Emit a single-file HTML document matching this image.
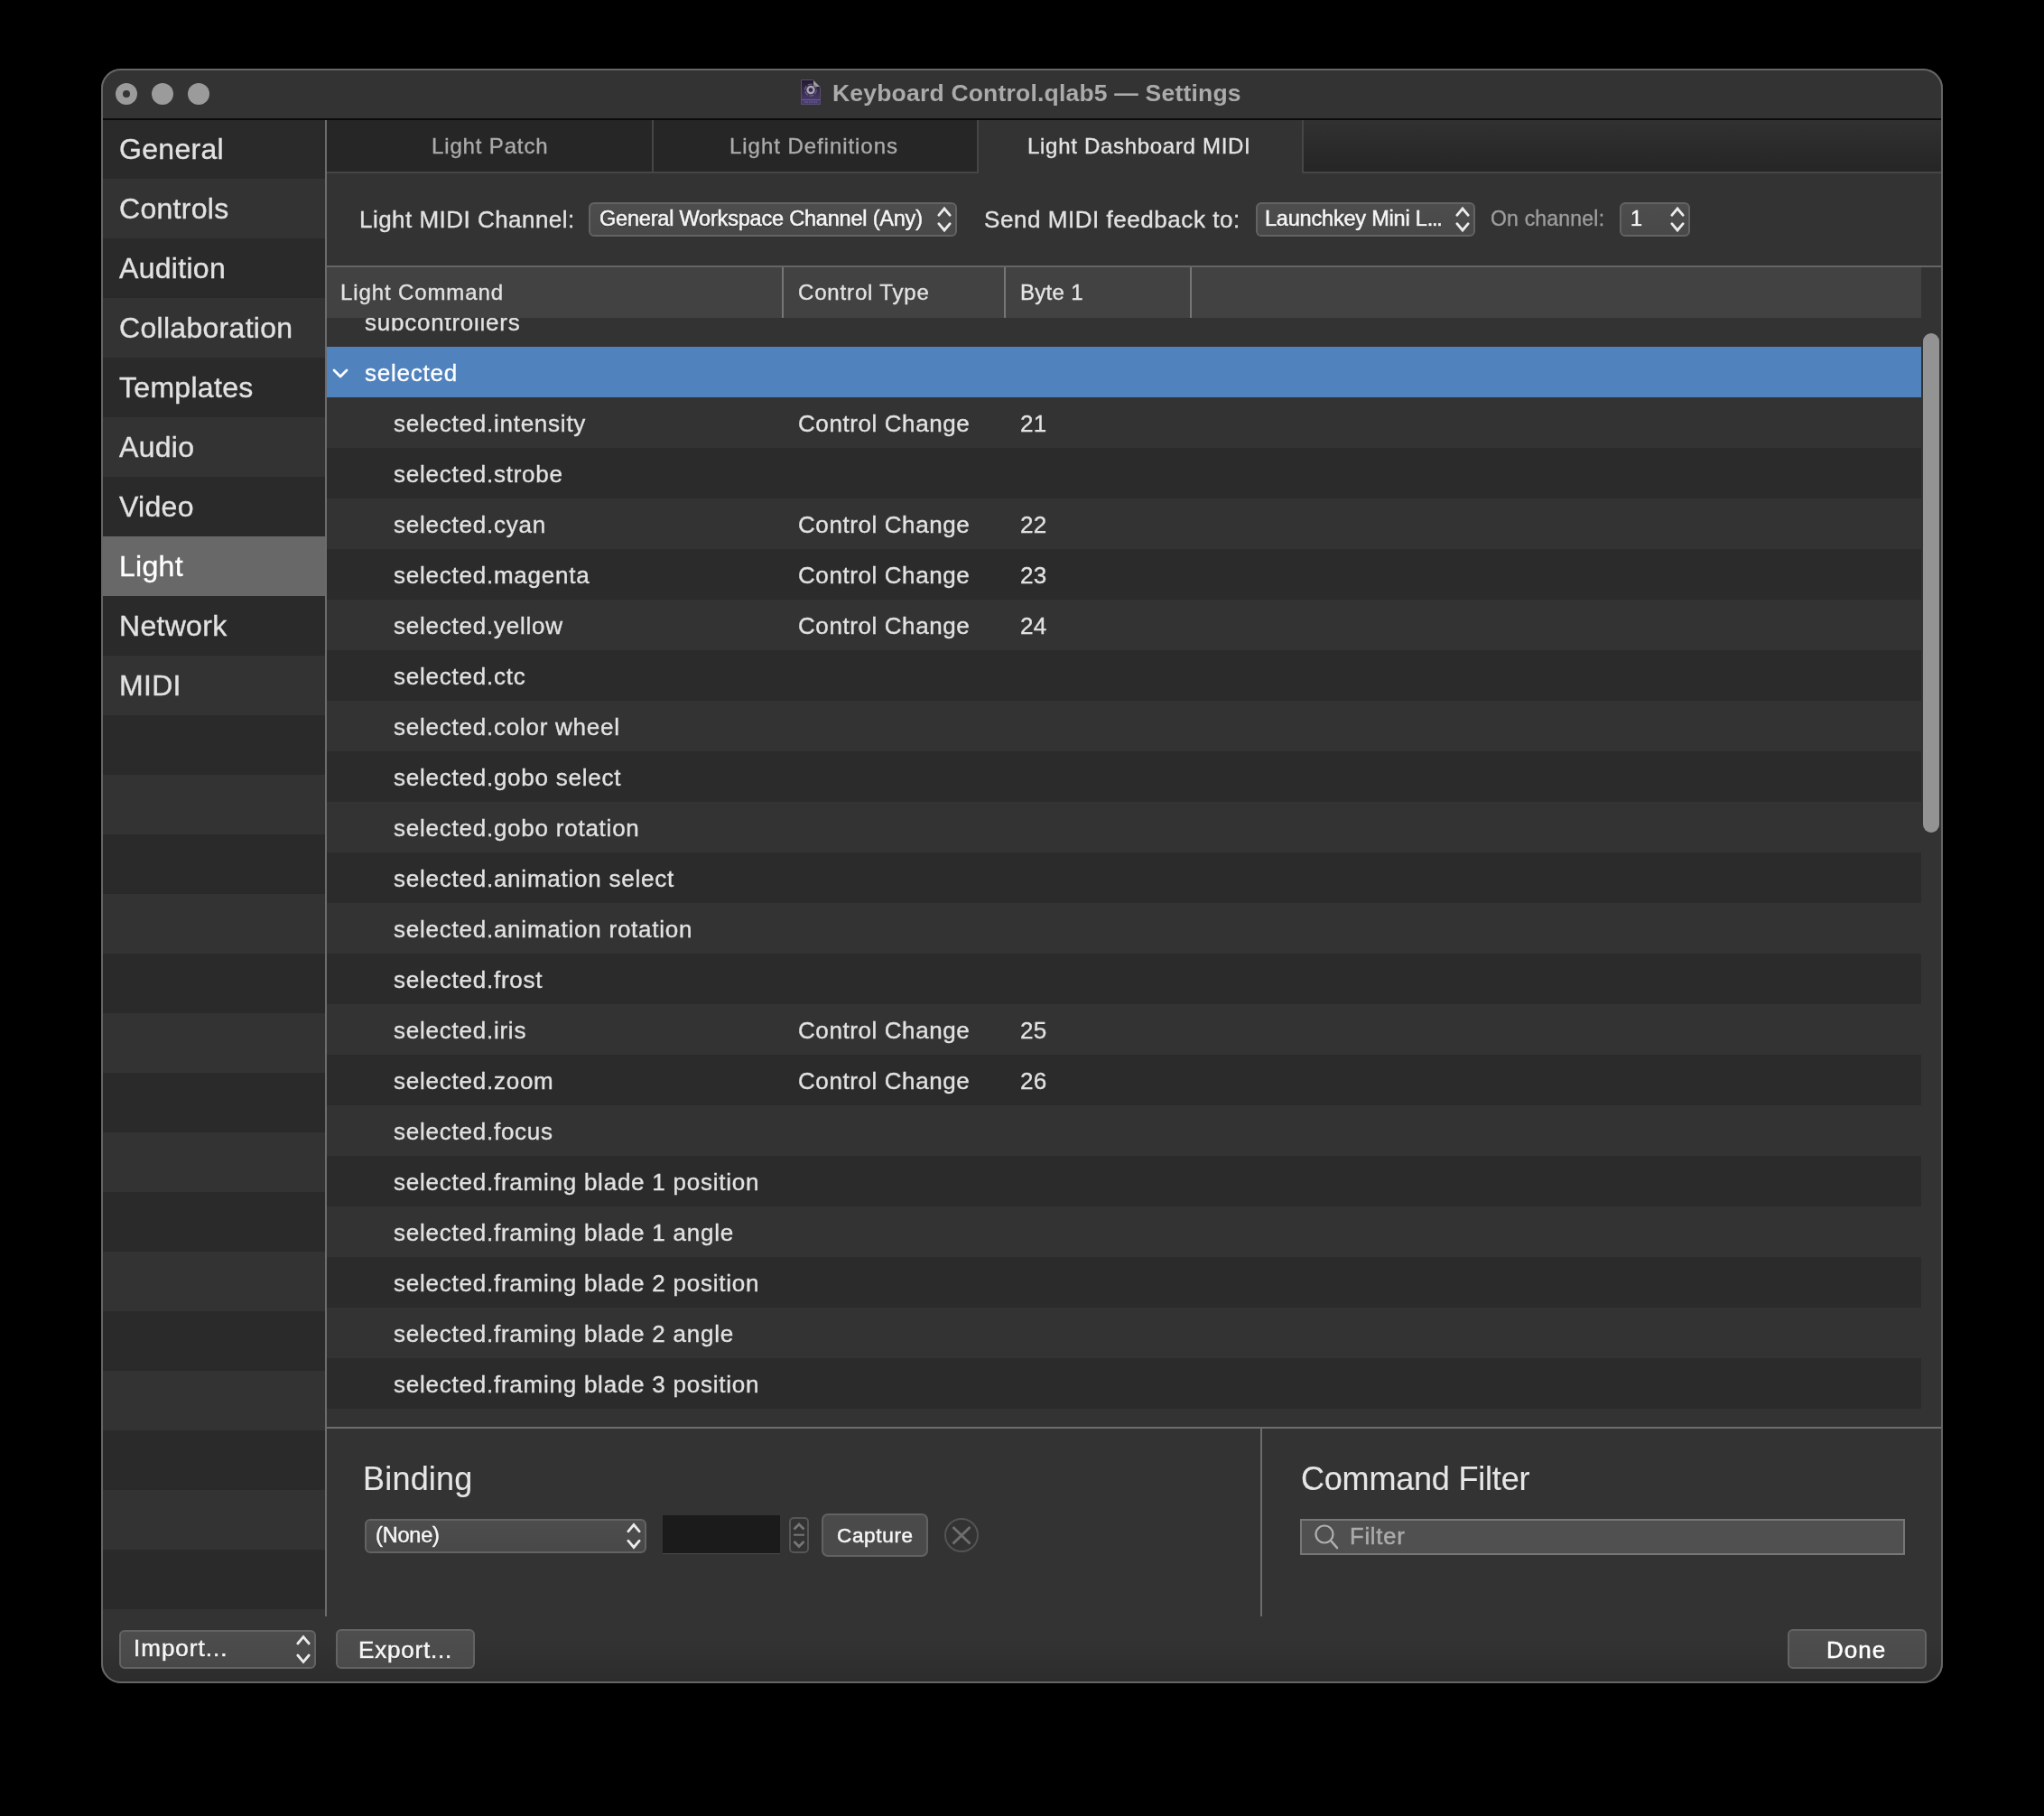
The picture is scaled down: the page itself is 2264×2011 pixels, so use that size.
<!DOCTYPE html><html><head><meta charset="utf-8"><style>
html,body{margin:0;padding:0;background:#000;width:2264px;height:2011px;overflow:hidden}
.t{position:absolute;white-space:nowrap;font-family:"Liberation Sans",sans-serif;will-change:transform;-webkit-text-stroke:0.35px currentColor}
.r{position:absolute}
svg{position:absolute;overflow:visible}
</style></head><body>
<div class="r" style="left:112px;top:76px;width:2040px;height:1788px;background:#333333;border-radius:22px;overflow:hidden;">
</div>
<div class="r" style="left:112px;top:76px;width:2040px;height:1788px;border-radius:22px;overflow:hidden;">
<div class="r" style="left:-112px;top:-76px;width:2264px;height:2011px;">
<div class="r" style="left:112px;top:76px;width:2040px;height:56px;background:#333333;"></div>
<div class="r" style="left:112px;top:131px;width:2040px;height:2px;background:#0c0c0c;"></div>
<div class="r" style="left:112px;top:133px;width:248px;height:65px;background:#2a2a2a;"></div>
<div class="r" style="left:112px;top:198px;width:248px;height:66px;background:#333333;"></div>
<div class="r" style="left:112px;top:264px;width:248px;height:66px;background:#2a2a2a;"></div>
<div class="r" style="left:112px;top:330px;width:248px;height:66px;background:#333333;"></div>
<div class="r" style="left:112px;top:396px;width:248px;height:66px;background:#2a2a2a;"></div>
<div class="r" style="left:112px;top:462px;width:248px;height:66px;background:#333333;"></div>
<div class="r" style="left:112px;top:528px;width:248px;height:66px;background:#2a2a2a;"></div>
<div class="r" style="left:112px;top:594px;width:250px;height:66px;background:#686868;"></div>
<div class="r" style="left:112px;top:660px;width:248px;height:66px;background:#2a2a2a;"></div>
<div class="r" style="left:112px;top:726px;width:248px;height:66px;background:#333333;"></div>
<div class="r" style="left:112px;top:792px;width:248px;height:66px;background:#2a2a2a;"></div>
<div class="r" style="left:112px;top:858px;width:248px;height:66px;background:#333333;"></div>
<div class="r" style="left:112px;top:924px;width:248px;height:66px;background:#2a2a2a;"></div>
<div class="r" style="left:112px;top:990px;width:248px;height:66px;background:#333333;"></div>
<div class="r" style="left:112px;top:1056px;width:248px;height:66px;background:#2a2a2a;"></div>
<div class="r" style="left:112px;top:1122px;width:248px;height:66px;background:#333333;"></div>
<div class="r" style="left:112px;top:1188px;width:248px;height:66px;background:#2a2a2a;"></div>
<div class="r" style="left:112px;top:1254px;width:248px;height:66px;background:#333333;"></div>
<div class="r" style="left:112px;top:1320px;width:248px;height:66px;background:#2a2a2a;"></div>
<div class="r" style="left:112px;top:1386px;width:248px;height:66px;background:#333333;"></div>
<div class="r" style="left:112px;top:1452px;width:248px;height:66px;background:#2a2a2a;"></div>
<div class="r" style="left:112px;top:1518px;width:248px;height:66px;background:#333333;"></div>
<div class="r" style="left:112px;top:1584px;width:248px;height:66px;background:#2a2a2a;"></div>
<div class="r" style="left:112px;top:1650px;width:248px;height:66px;background:#333333;"></div>
<div class="r" style="left:112px;top:1716px;width:248px;height:66px;background:#2a2a2a;"></div>
<div class="r" style="left:112px;top:1782px;width:2040px;height:82px;background:linear-gradient(#333333 40%,#2c2c2c);"></div>
<div class="t " style="left:132px;top:149px;font-size:32px;line-height:32px;color:#e2e2e2;font-weight:400;letter-spacing:0.3px;">General</div>
<div class="t " style="left:132px;top:215px;font-size:32px;line-height:32px;color:#e2e2e2;font-weight:400;letter-spacing:0.3px;">Controls</div>
<div class="t " style="left:132px;top:281px;font-size:32px;line-height:32px;color:#e2e2e2;font-weight:400;letter-spacing:0.3px;">Audition</div>
<div class="t " style="left:132px;top:347px;font-size:32px;line-height:32px;color:#e2e2e2;font-weight:400;letter-spacing:0.3px;">Collaboration</div>
<div class="t " style="left:132px;top:413px;font-size:32px;line-height:32px;color:#e2e2e2;font-weight:400;letter-spacing:0.3px;">Templates</div>
<div class="t " style="left:132px;top:479px;font-size:32px;line-height:32px;color:#e2e2e2;font-weight:400;letter-spacing:0.3px;">Audio</div>
<div class="t " style="left:132px;top:545px;font-size:32px;line-height:32px;color:#e2e2e2;font-weight:400;letter-spacing:0.3px;">Video</div>
<div class="t " style="left:132px;top:611px;font-size:32px;line-height:32px;color:#ffffff;font-weight:400;letter-spacing:0.3px;">Light</div>
<div class="t " style="left:132px;top:677px;font-size:32px;line-height:32px;color:#e2e2e2;font-weight:400;letter-spacing:0.3px;">Network</div>
<div class="t " style="left:132px;top:743px;font-size:32px;line-height:32px;color:#e2e2e2;font-weight:400;letter-spacing:0.3px;">MIDI</div>
<div class="r" style="left:360px;top:133px;width:2px;height:1657px;background:#6c6c6c;"></div>
<div class="r" style="left:362px;top:133px;width:1790px;height:58px;background:#262626;"></div>
<div class="r" style="left:1443px;top:133px;width:709px;height:58px;background:linear-gradient(#313131,#252525);"></div>
<div class="r" style="left:362px;top:190px;width:1790px;height:2px;background:#464646;"></div>
<div class="r" style="left:722px;top:133px;width:2px;height:58px;background:#464646;"></div>
<div class="r" style="left:1442px;top:133px;width:2px;height:58px;background:#464646;"></div>
<div class="r" style="left:1082px;top:133px;width:2px;height:58px;background:#464646;"></div>
<div class="r" style="left:1084px;top:133px;width:358px;height:59px;background:#333333;"></div>
<div class="t " style="left:478px;top:150px;font-size:24px;line-height:24px;color:#ababab;font-weight:400;letter-spacing:0.85px;">Light Patch</div>
<div class="t " style="left:808.4px;top:150px;font-size:24px;line-height:24px;color:#ababab;font-weight:400;letter-spacing:0.95px;">Light Definitions</div>
<div class="t " style="left:1138px;top:150px;font-size:24px;line-height:24px;color:#e4e4e4;font-weight:400;letter-spacing:0.7px;">Light Dashboard MIDI</div>
<div class="t " style="left:398px;top:230px;font-size:26px;line-height:26px;color:#e2e2e2;font-weight:400;letter-spacing:0.47px;">Light MIDI Channel:</div>
<div class="t " style="left:1090.4px;top:230px;font-size:26px;line-height:26px;color:#e2e2e2;font-weight:400;letter-spacing:0.55px;">Send MIDI feedback to:</div>
<div class="t " style="left:1650.5px;top:231px;font-size:23px;line-height:23px;color:#9d9d9d;font-weight:400;letter-spacing:0.2px;">On channel:</div>
<div class="r" style="left:652px;top:224px;width:408px;height:38px;box-sizing:border-box;border:2px solid #636363;border-radius:6px;background:linear-gradient(#4d4d4d,#484848);"></div>
<div class="t " style="left:663.8px;top:231px;font-size:23.5px;line-height:23.5px;color:#f6f6f6;font-weight:400;letter-spacing:-0.2px;text-shadow:0 1px 1px rgba(0,0,0,.55);-webkit-text-stroke:0.5px currentColor;">General Workspace Channel (Any)</div>
<svg style="left:0;top:0" width="2264" height="2011" viewBox="0 0 2264 2011"><g fill="none" stroke="#ececec" stroke-width="2.8" stroke-linecap="round" stroke-linejoin="miter"><path d="M1039.8,238.3 L1046,231.0 L1052.2,238.3"/><path d="M1039.8,247.7 L1046,255.0 L1052.2,247.7"/></g></svg>
<div class="r" style="left:1391px;top:224px;width:243px;height:38px;box-sizing:border-box;border:2px solid #636363;border-radius:6px;background:linear-gradient(#4d4d4d,#484848);"></div>
<div class="t " style="left:1401px;top:231px;font-size:23.5px;line-height:23.5px;color:#f6f6f6;font-weight:400;letter-spacing:-0.2px;text-shadow:0 1px 1px rgba(0,0,0,.55);-webkit-text-stroke:0.5px currentColor;">Launchkey Mini L<span style="letter-spacing:-1.2px">...</span></div>
<svg style="left:0;top:0" width="2264" height="2011" viewBox="0 0 2264 2011"><g fill="none" stroke="#ececec" stroke-width="2.8" stroke-linecap="round" stroke-linejoin="miter"><path d="M1613.8,238.3 L1620,231.0 L1626.2,238.3"/><path d="M1613.8,247.7 L1620,255.0 L1626.2,247.7"/></g></svg>
<div class="r" style="left:1794px;top:224px;width:78px;height:38px;box-sizing:border-box;border:2px solid #636363;border-radius:6px;background:linear-gradient(#4d4d4d,#484848);"></div>
<div class="t " style="left:1805.5px;top:231px;font-size:23.5px;line-height:23.5px;color:#f6f6f6;font-weight:400;text-shadow:0 1px 1px rgba(0,0,0,.55);-webkit-text-stroke:0.5px currentColor;">1</div>
<svg style="left:0;top:0" width="2264" height="2011" viewBox="0 0 2264 2011"><g fill="none" stroke="#ececec" stroke-width="2.8" stroke-linecap="round" stroke-linejoin="miter"><path d="M1851.8,238.3 L1858,231.0 L1864.2,238.3"/><path d="M1851.8,247.7 L1858,255.0 L1864.2,247.7"/></g></svg>
<div class="r" style="left:362px;top:294px;width:1790px;height:2px;background:#656565;"></div>
<div class="r" style="left:362px;top:296px;width:1766px;height:56px;background:#424242;"></div>
<div class="r" style="left:866px;top:296px;width:2px;height:56px;background:#767676;"></div>
<div class="r" style="left:1112px;top:296px;width:2px;height:56px;background:#767676;"></div>
<div class="r" style="left:1318px;top:296px;width:2px;height:56px;background:#767676;"></div>
<div class="t " style="left:376.9px;top:312px;font-size:24px;line-height:24px;color:#e2e2e2;font-weight:400;letter-spacing:0.88px;">Light Command</div>
<div class="t " style="left:883.8px;top:312px;font-size:24px;line-height:24px;color:#e2e2e2;font-weight:400;letter-spacing:0.84px;">Control Type</div>
<div class="t " style="left:1130.2px;top:312px;font-size:24px;line-height:24px;color:#e4e4e4;font-weight:400;letter-spacing:0.3px;">Byte 1</div>
<div class="r" style="left:362px;top:352px;width:1766px;height:1208px;overflow:hidden;">
<div class="r" style="left:0;top:-24px;width:1766px;height:56px;background:#333333"></div>
<div class="t " style="left:41.80000000000001px;top:-8px;font-size:26px;line-height:26px;color:#e2e2e2;font-weight:400;letter-spacing:0.76px;">subcontrollers</div>
<div class="r" style="left:0;top:32px;width:1766px;height:56px;background:#5082be"></div>
<div class="t " style="left:41.80000000000001px;top:48px;font-size:26px;line-height:26px;color:#ffffff;font-weight:400;letter-spacing:0.76px;">selected</div>
<div class="r" style="left:0;top:88px;width:1766px;height:56px;background:#333333"></div>
<div class="t " style="left:74.19999999999999px;top:104px;font-size:26px;line-height:26px;color:#e2e2e2;font-weight:400;letter-spacing:0.76px;">selected.intensity</div>
<div class="t " style="left:521.8px;top:104px;font-size:26px;line-height:26px;color:#e2e2e2;font-weight:400;letter-spacing:0.59px;">Control Change</div>
<div class="t " style="left:767.5px;top:104px;font-size:26px;line-height:26px;color:#e2e2e2;font-weight:400;letter-spacing:0.4px;">21</div>
<div class="r" style="left:0;top:144px;width:1766px;height:56px;background:#2b2b2b"></div>
<div class="t " style="left:74.19999999999999px;top:160px;font-size:26px;line-height:26px;color:#e2e2e2;font-weight:400;letter-spacing:0.76px;">selected.strobe</div>
<div class="r" style="left:0;top:200px;width:1766px;height:56px;background:#333333"></div>
<div class="t " style="left:74.19999999999999px;top:216px;font-size:26px;line-height:26px;color:#e2e2e2;font-weight:400;letter-spacing:0.76px;">selected.cyan</div>
<div class="t " style="left:521.8px;top:216px;font-size:26px;line-height:26px;color:#e2e2e2;font-weight:400;letter-spacing:0.59px;">Control Change</div>
<div class="t " style="left:767.5px;top:216px;font-size:26px;line-height:26px;color:#e2e2e2;font-weight:400;letter-spacing:0.4px;">22</div>
<div class="r" style="left:0;top:256px;width:1766px;height:56px;background:#2b2b2b"></div>
<div class="t " style="left:74.19999999999999px;top:272px;font-size:26px;line-height:26px;color:#e2e2e2;font-weight:400;letter-spacing:0.76px;">selected.magenta</div>
<div class="t " style="left:521.8px;top:272px;font-size:26px;line-height:26px;color:#e2e2e2;font-weight:400;letter-spacing:0.59px;">Control Change</div>
<div class="t " style="left:767.5px;top:272px;font-size:26px;line-height:26px;color:#e2e2e2;font-weight:400;letter-spacing:0.4px;">23</div>
<div class="r" style="left:0;top:312px;width:1766px;height:56px;background:#333333"></div>
<div class="t " style="left:74.19999999999999px;top:328px;font-size:26px;line-height:26px;color:#e2e2e2;font-weight:400;letter-spacing:0.76px;">selected.yellow</div>
<div class="t " style="left:521.8px;top:328px;font-size:26px;line-height:26px;color:#e2e2e2;font-weight:400;letter-spacing:0.59px;">Control Change</div>
<div class="t " style="left:767.5px;top:328px;font-size:26px;line-height:26px;color:#e2e2e2;font-weight:400;letter-spacing:0.4px;">24</div>
<div class="r" style="left:0;top:368px;width:1766px;height:56px;background:#2b2b2b"></div>
<div class="t " style="left:74.19999999999999px;top:384px;font-size:26px;line-height:26px;color:#e2e2e2;font-weight:400;letter-spacing:0.76px;">selected.ctc</div>
<div class="r" style="left:0;top:424px;width:1766px;height:56px;background:#333333"></div>
<div class="t " style="left:74.19999999999999px;top:440px;font-size:26px;line-height:26px;color:#e2e2e2;font-weight:400;letter-spacing:0.76px;">selected.color wheel</div>
<div class="r" style="left:0;top:480px;width:1766px;height:56px;background:#2b2b2b"></div>
<div class="t " style="left:74.19999999999999px;top:496px;font-size:26px;line-height:26px;color:#e2e2e2;font-weight:400;letter-spacing:0.76px;">selected.gobo select</div>
<div class="r" style="left:0;top:536px;width:1766px;height:56px;background:#333333"></div>
<div class="t " style="left:74.19999999999999px;top:552px;font-size:26px;line-height:26px;color:#e2e2e2;font-weight:400;letter-spacing:0.76px;">selected.gobo rotation</div>
<div class="r" style="left:0;top:592px;width:1766px;height:56px;background:#2b2b2b"></div>
<div class="t " style="left:74.19999999999999px;top:608px;font-size:26px;line-height:26px;color:#e2e2e2;font-weight:400;letter-spacing:0.76px;">selected.animation select</div>
<div class="r" style="left:0;top:648px;width:1766px;height:56px;background:#333333"></div>
<div class="t " style="left:74.19999999999999px;top:664px;font-size:26px;line-height:26px;color:#e2e2e2;font-weight:400;letter-spacing:0.76px;">selected.animation rotation</div>
<div class="r" style="left:0;top:704px;width:1766px;height:56px;background:#2b2b2b"></div>
<div class="t " style="left:74.19999999999999px;top:720px;font-size:26px;line-height:26px;color:#e2e2e2;font-weight:400;letter-spacing:0.76px;">selected.frost</div>
<div class="r" style="left:0;top:760px;width:1766px;height:56px;background:#333333"></div>
<div class="t " style="left:74.19999999999999px;top:776px;font-size:26px;line-height:26px;color:#e2e2e2;font-weight:400;letter-spacing:0.76px;">selected.iris</div>
<div class="t " style="left:521.8px;top:776px;font-size:26px;line-height:26px;color:#e2e2e2;font-weight:400;letter-spacing:0.59px;">Control Change</div>
<div class="t " style="left:767.5px;top:776px;font-size:26px;line-height:26px;color:#e2e2e2;font-weight:400;letter-spacing:0.4px;">25</div>
<div class="r" style="left:0;top:816px;width:1766px;height:56px;background:#2b2b2b"></div>
<div class="t " style="left:74.19999999999999px;top:832px;font-size:26px;line-height:26px;color:#e2e2e2;font-weight:400;letter-spacing:0.76px;">selected.zoom</div>
<div class="t " style="left:521.8px;top:832px;font-size:26px;line-height:26px;color:#e2e2e2;font-weight:400;letter-spacing:0.59px;">Control Change</div>
<div class="t " style="left:767.5px;top:832px;font-size:26px;line-height:26px;color:#e2e2e2;font-weight:400;letter-spacing:0.4px;">26</div>
<div class="r" style="left:0;top:872px;width:1766px;height:56px;background:#333333"></div>
<div class="t " style="left:74.19999999999999px;top:888px;font-size:26px;line-height:26px;color:#e2e2e2;font-weight:400;letter-spacing:0.76px;">selected.focus</div>
<div class="r" style="left:0;top:928px;width:1766px;height:56px;background:#2b2b2b"></div>
<div class="t " style="left:74.19999999999999px;top:944px;font-size:26px;line-height:26px;color:#e2e2e2;font-weight:400;letter-spacing:0.76px;">selected.framing blade 1 position</div>
<div class="r" style="left:0;top:984px;width:1766px;height:56px;background:#333333"></div>
<div class="t " style="left:74.19999999999999px;top:1000px;font-size:26px;line-height:26px;color:#e2e2e2;font-weight:400;letter-spacing:0.76px;">selected.framing blade 1 angle</div>
<div class="r" style="left:0;top:1040px;width:1766px;height:56px;background:#2b2b2b"></div>
<div class="t " style="left:74.19999999999999px;top:1056px;font-size:26px;line-height:26px;color:#e2e2e2;font-weight:400;letter-spacing:0.76px;">selected.framing blade 2 position</div>
<div class="r" style="left:0;top:1096px;width:1766px;height:56px;background:#333333"></div>
<div class="t " style="left:74.19999999999999px;top:1112px;font-size:26px;line-height:26px;color:#e2e2e2;font-weight:400;letter-spacing:0.76px;">selected.framing blade 2 angle</div>
<div class="r" style="left:0;top:1152px;width:1766px;height:56px;background:#2b2b2b"></div>
<div class="t " style="left:74.19999999999999px;top:1168px;font-size:26px;line-height:26px;color:#e2e2e2;font-weight:400;letter-spacing:0.76px;">selected.framing blade 3 position</div>
<svg style="left:0;top:0" width="1766" height="1208"><path d="M8,58 L15,65 L22,58" transform="translate(0,0)" fill="none" stroke="#fff" stroke-width="2.8" stroke-linecap="round" stroke-linejoin="round"/></svg>
</div>
<div class="r" style="left:2130px;top:369px;width:18px;height:553px;border-radius:9px;background:#939393"></div>
<div class="r" style="left:362px;top:1580px;width:1790px;height:2px;background:#6e6e6e;"></div>
<div class="r" style="left:1396px;top:1582px;width:2px;height:208px;background:#6c6c6c;"></div>
<div class="t " style="left:401.6px;top:1620px;font-size:36px;line-height:36px;color:#e6e6e6;font-weight:400;letter-spacing:0.2px;-webkit-text-stroke:0.1px currentColor;">Binding</div>
<div class="t " style="left:1440.8px;top:1620px;font-size:36px;line-height:36px;color:#e6e6e6;font-weight:400;letter-spacing:-0.2px;-webkit-text-stroke:0.1px currentColor;">Command Filter</div>
<div class="r" style="left:404px;top:1682px;width:312px;height:38px;box-sizing:border-box;border:2px solid #636363;border-radius:6px;background:linear-gradient(#4d4d4d,#484848);"></div>
<div class="t " style="left:416.2px;top:1689px;font-size:23.5px;line-height:23.5px;color:#f6f6f6;font-weight:400;letter-spacing:-0.2px;text-shadow:0 1px 1px rgba(0,0,0,.55);-webkit-text-stroke:0.5px currentColor;">(None)</div>
<svg style="left:0;top:0" width="2264" height="2011" viewBox="0 0 2264 2011"><g fill="none" stroke="#ececec" stroke-width="2.8" stroke-linecap="round" stroke-linejoin="miter"><path d="M695.8,1695.8 L702,1688.5 L708.2,1695.8"/><path d="M695.8,1706.2 L702,1713.5 L708.2,1706.2"/></g></svg>
<div class="r" style="left:734px;top:1678px;width:130px;height:42px;background:#1b1b1b;box-shadow:0 1px 0 #4a4a4a;"></div>
<div class="r" style="left:874px;top:1680px;width:22px;height:40px;box-sizing:border-box;border:2px solid #565656;border-radius:5px;"></div>
<svg style="left:0;top:0" width="2264" height="2011"><g fill="none" stroke="#767676" stroke-width="2.8" stroke-linecap="butt" stroke-linejoin="miter"><path d="M879.5,1693.5 L885,1688 L890.5,1693.5"/><path d="M879.5,1707 L885,1712.5 L890.5,1707"/><path d="M879,1699.7 L891,1699.7" stroke-width="2"/></g></svg>
<div class="r" style="left:910px;top:1676px;width:118px;height:48px;box-sizing:border-box;border:2px solid #626262;border-radius:7px;background:#4a4a4a"></div>
<div class="t " style="left:927px;top:1690px;font-size:22.5px;line-height:22.5px;color:#f6f6f6;font-weight:400;letter-spacing:0.67px;-webkit-text-stroke:0.5px currentColor;">Capture</div>
<svg style="left:0;top:0" width="2264" height="2011"><circle cx="1065" cy="1700" r="18" fill="none" stroke="#545454" stroke-width="2"/><g stroke="#6e6e6e" stroke-width="3" stroke-linecap="butt"><path d="M1055.5,1691 L1074.5,1709.5"/><path d="M1074.5,1691 L1055.5,1709.5"/></g></svg>
<div class="r" style="left:1440px;top:1682px;width:670px;height:40px;box-sizing:border-box;border:2px solid #777;background:#505050"></div>
<svg style="left:0;top:0" width="2264" height="2011"><circle cx="1467" cy="1699" r="9.5" fill="none" stroke="#b0b0b0" stroke-width="2.2"/><path d="M1474,1706 L1481,1714" stroke="#b0b0b0" stroke-width="2.6" stroke-linecap="round"/></svg>
<div class="t " style="left:1495.4px;top:1689px;font-size:25.5px;line-height:25.5px;color:#ababab;font-weight:400;letter-spacing:0.8px;-webkit-text-stroke:0.5px currentColor;">Filter</div>
<div class="r" style="left:132px;top:1805px;width:218px;height:43px;box-sizing:border-box;border:2px solid #636363;border-radius:6px;background:linear-gradient(#4d4d4d,#484848);"></div>
<div class="t " style="left:148px;top:1812px;font-size:26px;line-height:26px;color:#f6f6f6;font-weight:400;letter-spacing:1.0px;text-shadow:0 1px 1px rgba(0,0,0,.55);-webkit-text-stroke:0.5px currentColor;">Import...</div>
<svg style="left:0;top:0" width="2264" height="2011" viewBox="0 0 2264 2011"><g fill="none" stroke="#ececec" stroke-width="2.8" stroke-linecap="round" stroke-linejoin="miter"><path d="M329.8,1820.0 L336,1812.7 L342.2,1820.0"/><path d="M329.8,1833.0 L336,1840.3 L342.2,1833.0"/></g></svg>
<div class="r" style="left:372px;top:1804px;width:154px;height:44px;box-sizing:border-box;border:2px solid #636363;border-radius:6px;background:linear-gradient(#4e4e4e,#4a4a4a)"></div>
<div class="t " style="left:397px;top:1814px;font-size:26px;line-height:26px;color:#f6f6f6;font-weight:400;letter-spacing:0.8px;text-shadow:0 1px 1px rgba(0,0,0,.55);-webkit-text-stroke:0.5px currentColor;">Export...</div>
<div class="r" style="left:1980px;top:1804px;width:154px;height:44px;box-sizing:border-box;border:2px solid #636363;border-radius:6px;background:linear-gradient(#4e4e4e,#4a4a4a)"></div>
<div class="t " style="left:2023px;top:1814px;font-size:26px;line-height:26px;color:#ffffff;font-weight:400;letter-spacing:1.0px;-webkit-text-stroke:0.5px currentColor;">Done</div>
<div class="r" style="left:128px;top:92px;width:24px;height:24px;border-radius:12px;background:#9b9b9b"></div>
<div class="r" style="left:168px;top:92px;width:24px;height:24px;border-radius:12px;background:#9b9b9b"></div>
<div class="r" style="left:208px;top:92px;width:24px;height:24px;border-radius:12px;background:#9b9b9b"></div>
<div class="r" style="left:136px;top:100px;width:8px;height:8px;border-radius:4px;background:#353535"></div>
<svg style="left:887px;top:88px" width="22" height="28" viewBox="0 0 22 28">
<defs><linearGradient id="pg" x1="0" y1="0" x2="0" y2="1"><stop offset="0" stop-color="#201a2c"/><stop offset="0.75" stop-color="#453864"/><stop offset="1" stop-color="#4a3a78"/></linearGradient></defs>
<path d="M0.5,0.5 H14 L21.5,8 V27.5 H0.5 Z" fill="url(#pg)" stroke="#574f70" stroke-width="1"/>
<path d="M14,0.5 L21.5,8 H14 Z" fill="#9e9e9e"/>
<path d="M13.8,0.2 L21.8,8.2" stroke="#1a1a1a" stroke-width="1" opacity="0.75"/>
<circle cx="11" cy="11.6" r="6.4" fill="none" stroke="#6e6682" stroke-width="1.1" stroke-dasharray="5 1.5"/>
<circle cx="11" cy="11.6" r="3.6" fill="none" stroke="#a9a6b2" stroke-width="2.3"/>
<path d="M1,22.6 H21" stroke="#6e6490" stroke-width="1"/>
<path d="M4,25 H18" stroke="#7a70a0" stroke-width="1.2" stroke-dasharray="1.5 1"/>
</svg>
<div class="t " style="left:922px;top:90px;font-size:26.5px;line-height:26.5px;color:#ababab;font-weight:700;letter-spacing:0.2px;-webkit-text-stroke:0;">Keyboard Control.qlab5 — Settings</div>
</div></div>
<div class="r" style="left:112px;top:76px;width:2040px;height:1788px;box-sizing:border-box;border:2px solid #666;border-radius:22px;"></div>
</body></html>
